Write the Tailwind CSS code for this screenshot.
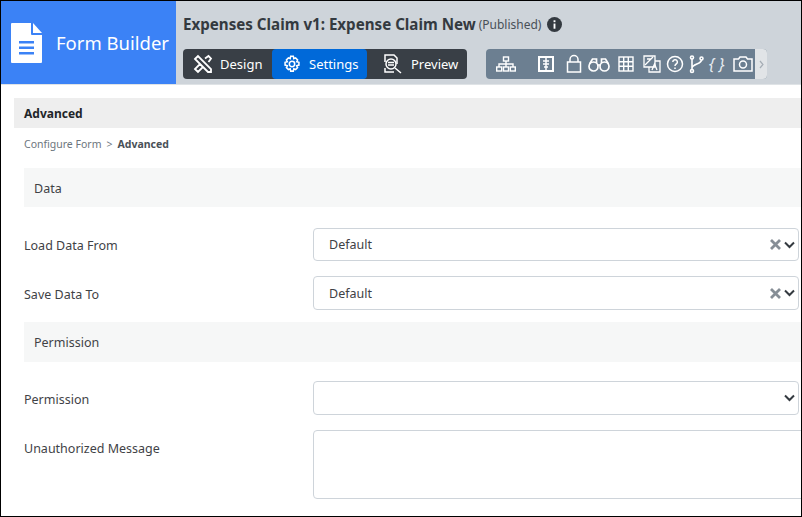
<!DOCTYPE html>
<html>
<head>
  <meta charset="UTF-8">
  <title>Form Builder</title>
  <script src="https://cdn.jsdelivr.net/npm/@tailwindcss/browser@4"></script>
</head>
<body class="h-[517px] w-[802px] overflow-hidden bg-white font-['Noto_Sans',sans-serif] text-[#3f4246]">
  <div class="h-[517px] border border-black overflow-hidden">
    <header class="flex h-[84px] border-b border-[#dfe3e6] bg-[#ced4da]">
      <div class="flex w-[175px] items-center bg-[#3b82f6] pl-[10px] text-white">
        <svg width="31" height="40" viewBox="0 0 31 40"><path d="M1 0h19v11a1 1 0 0 0 1 1h10v27a1 1 0 0 1-1 1H1a1 1 0 0 1-1-1V1a1 1 0 0 1 1-1z" fill="#fff"/><path d="M22 0l9 10h-9z" fill="#fff"/><path d="M8 18h15v2.500H8zM8 23.500h15V26H8zM8 29h15v2.500H8z" fill="#3b82f6"/></svg>
        <span class="ml-[14px] pt-[1px] text-[18.500px] whitespace-nowrap">Form Builder</span>
      </div>
      <div class="pl-[7px] pt-[13px]">
        <div class="flex h-[20px] items-center text-[#343a40]">
          <span class="text-[15.150px] font-bold whitespace-nowrap">Expenses Claim v1: Expense Claim New</span>
          <span class="ml-[3px] pt-[1px] text-xs text-[#495057]">(Published)</span>
          <svg class="ml-[6px]" width="15" height="15" viewBox="0 0 16 16"><circle cx="8" cy="8" r="8" fill="#343a40"/><rect x="7" y="7" width="2" height="5.500" fill="#fff"/><rect x="7" y="3.500" width="2" height="2" fill="#fff"/></svg>
        </div>
        <div class="mt-[15px] flex items-center">
          <nav class="flex h-[30px] w-[284px] rounded bg-[#393f46] text-[13px] text-white">
            <span class="flex w-[89px] items-center gap-[7px] pl-[10px]">
              <svg width="20" height="20" viewBox="0 0 20 20" fill="none" stroke="#fff" stroke-width="1.800"><path d="M2 5l3-3 13 13 0 3-3 0zM12 4.500l3.500-2.500 2.500 2.500-2.500 3.500M2 15l3 3 5-5-3-3z"/></svg><span class="pt-[1px]">Design</span></span>
            <span class="flex w-[95px] items-center gap-2 rounded bg-[#0069d9] pl-[11px]">
              <svg width="18" height="18" viewBox="0 0 20 20" fill="none" stroke="#fff" stroke-width="1.700"><circle cx="10" cy="10" r="3"/><path d="M8.500 1.500h3l.5 2.500 2-.8 2.200 2.200-1 2.100 2.500.7v3l-2.500.7 1 2.100-2.200 2.200-2-.8-.5 2.500h-3l-.5-2.500-2 .8-2.200-2.200 1-2.100-2.500-.7v-3l2.500-.7-1-2.100L6 3.200l2 .8z"/></svg><span class="pt-[1px]">Settings</span></span>
            <span class="flex items-center gap-[7px] pl-[15px]">
              <svg width="22" height="22" viewBox="0 0 22 22" fill="none" stroke="#fff" stroke-width="1.500"><path d="M3 9V2h9l3 3v6M3 15v4h9"/><circle cx="9" cy="11" r="5"/><path d="M6 9.500h6M6 12h6M13 15l6 5"/></svg><span class="pt-[2px]">Preview</span></span>
          </nav>
          <div class="ml-[19px] flex h-[30px] w-[281px] items-center rounded bg-[#6c7f91] pl-[10px] text-white">
            <svg width="20" height="18" viewBox="0 0 20 18" fill="none" stroke="#fff" stroke-width="1.400"><rect x="7.500" y="2" width="5" height="4"/><rect x=".7" y="12" width="5" height="4"/><rect x="7.500" y="12" width="5" height="4"/><rect x="14.300" y="12" width="5" height="4"/><path d="M10 6v6M3 12V9h14v3"/></svg>
            <svg class="ml-[21px]" width="18" height="18" viewBox="0 0 18 18"><rect x="1" y="1" width="16" height="16" fill="#fff"/><rect x="3" y="3" width="12" height="12" fill="#6c7f91"/><path d="M9 3v12M6 6h6M6 9h6M7 12h4" stroke="#fff" stroke-width="1.500"/></svg>
            <svg class="ml-[10px]" width="18" height="20" viewBox="0 0 18 20" fill="none" stroke="#fff" stroke-width="1.500"><rect x="2.500" y="8" width="13" height="10"/><path d="M5 8V5.500a4 4 0 0 1 8 0V8"/></svg>
            <svg class="ml-[4px]" width="24" height="20" viewBox="0 0 24 20" fill="none" stroke="#fff" stroke-width="1.700"><circle cx="6.500" cy="12.500" r="4.500"/><circle cx="17.500" cy="12.500" r="4.500"/><path d="M10.500 11h3M2.500 10l3-5h4v4M21.500 10l-3-5h-4v4"/></svg>
            <svg class="ml-[7px]" width="16" height="18" viewBox="0 0 16 18" fill="none" stroke="#fff" stroke-width="1.400"><rect x="1" y="2" width="14" height="14"/><path d="M1 6.700h14M1 11.300h14M5.700 2v14M10.300 2v14"/></svg>
            <svg class="ml-[9px]" width="18" height="18" viewBox="0 0 18 18" fill="none" stroke="#fff" stroke-width="1.300"><path d="M1 1h11v11H1zM12 6h5v11H6v-5"/><path d="M2 10l8-8M4 4h4M9 15l2.500-6 2.500 6" /></svg>
            <svg class="ml-[5px]" width="18" height="18" viewBox="0 0 18 18" fill="none" stroke="#fff" stroke-width="1.500"><circle cx="9" cy="9" r="7.500"/><path d="M6.800 7a2.300 2.300 0 1 1 3.400 2c-.8.500-1.200 1-1.200 2M9 12.500V14"/></svg>
            <svg class="ml-[5px]" width="15" height="20" viewBox="0 0 15 20" fill="none" stroke="#fff" stroke-width="1.600"><circle cx="3" cy="3.500" r="1.500"/><circle cx="3" cy="17" r="1.500"/><circle cx="12.500" cy="4.500" r="1.500"/><path d="M3 5v10.500M12.500 6c0 4-9 4-9.500 8"/></svg>
            <span class="ml-[5px] w-[16px] text-[16px] italic leading-none whitespace-nowrap text-[#e8edf2]">{&nbsp;}</span>
            <svg class="ml-[8px]" width="20" height="18" viewBox="0 0 20 18" fill="none" stroke="#fff" stroke-width="1.500"><path d="M1 4h4.500L7 2h6l1.500 2H19v12H1z"/><circle cx="10" cy="9.500" r="3.500"/></svg>
            <span class="ml-auto flex h-full w-[12px] items-center justify-center rounded-r bg-[#e1e4e7]"><svg width="5" height="9" viewBox="0 0 5 9" fill="none" stroke="#a5adb5" stroke-width="1.200"><path d="M1 1l3 3.500-3 3.500"/></svg></span>
          </div>
        </div>
      </div>
    </header>
    <main class="pl-[13px]">
      <div class="mt-[13px] flex h-[30px] items-center bg-[#eeeeee] pl-[10px] pt-[1px] text-xs font-bold text-[#212529]">Advanced</div>
      <div class="flex h-[32px] items-center pl-[10px] pt-[2px] text-[10.500px] text-[#6c757d]">Configure Form<span class="mx-[5px]">&gt;</span><b class="text-[#495057]">Advanced</b></div>
      <div class="mt-[8px] pl-[10px] text-[12.500px]">
        <div class="flex h-[39px] items-center bg-[#f6f7f7] pl-[10px] pt-[4px]">Data</div>
        <div class="mt-[21px] flex h-[33px] items-center">
          <label class="w-[289px] pt-[3px]">Load Data From</label>
          <div class="flex h-[33px] w-[486px] items-center rounded border border-[#ced4da] pl-[15px] pr-[3px]"><span class="pt-[2px]">Default</span>
            <svg class="ml-auto" width="11" height="11" viewBox="0 0 11 11" fill="none" stroke="#868e96" stroke-width="2.800"><path d="M1 1l9 9M10 1l-9 9"/></svg>
            <svg class="ml-[3px]" width="11" height="8" viewBox="0 0 11 8" fill="none" stroke="#343a40" stroke-width="2"><path d="M1 1.500l4.500 4.500 4.500-4.500"/></svg>
          </div>
        </div>
        <div class="mt-[15px] flex h-[34px] items-center">
          <label class="w-[289px] pt-[4px]">Save Data To</label>
          <div class="flex h-[34px] w-[486px] items-center rounded border border-[#ced4da] pl-[15px] pr-[3px]"><span class="pt-[2px]">Default</span>
            <svg class="ml-auto" width="11" height="11" viewBox="0 0 11 11" fill="none" stroke="#868e96" stroke-width="2.800"><path d="M1 1l9 9M10 1l-9 9"/></svg>
            <svg class="ml-[3px]" width="11" height="8" viewBox="0 0 11 8" fill="none" stroke="#343a40" stroke-width="2"><path d="M1 1.500l4.500 4.500 4.500-4.500"/></svg>
          </div>
        </div>
        <div class="mt-[12px] flex h-[40px] items-center bg-[#f6f7f7] pl-[10px] pt-[2px]">Permission</div>
        <div class="mt-[19px] flex h-[34px] items-center">
          <label class="w-[289px] pt-[4px]">Permission</label>
          <div class="flex h-[34px] w-[486px] items-center rounded border border-[#ced4da] pl-[15px] pr-[3px]">
            <svg class="ml-auto" width="11" height="8" viewBox="0 0 11 8" fill="none" stroke="#343a40" stroke-width="2"><path d="M1 1.500l4.500 4.500 4.500-4.500"/></svg>
          </div>
        </div>
        <div class="mt-[15px] flex">
          <label class="w-[289px] shrink-0 pt-[10px]">Unauthorized Message</label>
          <div class="h-[69px] w-[500px] shrink-0 rounded border border-[#ced4da]"></div>
        </div>
      </div>
    </main>
  </div>
</body>
</html>
